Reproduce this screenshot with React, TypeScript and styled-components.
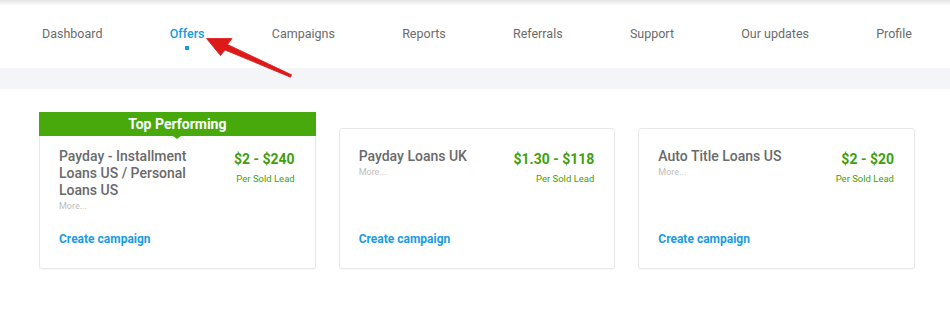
import React from "react";
import styled, { createGlobalStyle } from "styled-components";

const GlobalStyle = createGlobalStyle`
  html, body { margin: 0; padding: 0; background: #ffffff; }
  body { font-family: Roboto, "Liberation Sans", Arial, sans-serif; }
  * { box-sizing: border-box; }
`;

const Page = styled.div`
  position: relative;
  width: 950px;
  height: 329px;
  overflow: hidden;
  background: #fff;
`;

const TopShade = styled.div`
  height: 6px;
  background: linear-gradient(#e4e4e6, #ffffff);
`;

const Nav = styled.nav`
  height: 62px;
  display: flex;
  justify-content: space-between;
  align-items: flex-start;
  padding: 20px 38px 0 42px;
  background: #fff;
`;

const NavItem = styled.span<{ $active?: boolean }>`
  position: relative;
  font-size: 12.5px;
  line-height: 16px;
  color: ${(p) => (p.$active ? "#1b9be0" : "#6b6b6b")};
  font-weight: ${(p) => (p.$active ? 500 : 400)};
  &::after {
    content: "";
    display: ${(p) => (p.$active ? "block" : "none")};
    position: absolute;
    left: 50%;
    margin-left: -2px;
    top: 20px;
    width: 4px;
    height: 4px;
    background: #1b9be0;
  }
`;

const Band = styled.div`
  height: 21px;
  background: #f4f5f8;
`;

const Cards = styled.div`
  display: grid;
  grid-template-columns: repeat(3, 1fr);
  column-gap: 23px;
  padding: 39px 35px 0 39px;
  align-items: stretch;
`;

const Card = styled.div`
  position: relative;
  display: flex;
  flex-direction: column;
  border: 1px solid #e7e8ea;
  border-radius: 3px;
  background: #fff;
  padding: 19px 20px 22px 19px;
  box-shadow: 0 1px 1px rgba(0, 0, 0, 0.03);
`;

const Banner = styled.div`
  position: absolute;
  top: -17px;
  left: -1px;
  right: -1px;
  height: 24px;
  background: #47a90c;
  color: #fff;
  font-weight: 700;
  font-size: 14px;
  line-height: 24px;
  text-align: center;
  &::after {
    content: "";
    position: absolute;
    left: 50%;
    bottom: -3px;
    margin-left: -4px;
    border-left: 4px solid transparent;
    border-right: 4px solid transparent;
    border-top: 3px solid #47a90c;
  }
`;

const TopRow = styled.div`
  display: flex;
  justify-content: space-between;
  align-items: flex-start;
  gap: 12px;
`;

const Info = styled.div`
  flex: 1;
  min-width: 0;
`;

const Title = styled.div`
  font-size: 14px;
  line-height: 17px;
  font-weight: 500;
  color: #6a6a6a;
  max-width: 140px;
`;

const More = styled.div`
  font-size: 9px;
  line-height: 12px;
  color: #bdbdbd;
  margin-top: 1px;
`;

const PriceBox = styled.div`
  text-align: right;
  white-space: nowrap;
  padding-top: 2px;
`;

const Price = styled.div`
  font-size: 14px;
  line-height: 18px;
  font-weight: 700;
  color: #3f9f0c;
`;

const PerLead = styled.div`
  font-size: 9.5px;
  line-height: 12px;
  color: #3f9f0c;
  margin-top: 5px;
`;

const CreateLink = styled.a`
  display: block;
  margin-top: auto;
  padding-top: 20px;
  font-size: 12px;
  line-height: 14px;
  font-weight: 700;
  color: #1a9be2;
  text-decoration: none;
`;

const ArrowLayer = styled.svg`
  position: absolute;
  left: 0;
  top: 0;
  pointer-events: none;
`;

const navItems = [
  "Dashboard",
  "Offers",
  "Campaigns",
  "Reports",
  "Referrals",
  "Support",
  "Our updates",
  "Profile",
];

const offers = [
  {
    title: "Payday - Installment Loans US / Personal Loans US",
    price: "$2 - $240",
    top: true,
  },
  { title: "Payday Loans UK", price: "$1.30 - $118", top: false },
  { title: "Auto Title Loans US", price: "$2 - $20", top: false },
];

export default function App() {
  return (
    <Page>
      <GlobalStyle />
      <TopShade />
      <Nav>
        {navItems.map((n) => (
          <NavItem key={n} $active={n === "Offers"}>
            {n}
          </NavItem>
        ))}
      </Nav>
      <Band />
      <Cards>
        {offers.map((o) => (
          <Card key={o.title}>
            {o.top && <Banner>Top Performing</Banner>}
            <TopRow>
              <Info>
                <Title>{o.title}</Title>
                <More>More...</More>
              </Info>
              <PriceBox>
                <Price>{o.price}</Price>
                <PerLead>Per Sold Lead</PerLead>
              </PriceBox>
            </TopRow>
            <CreateLink href="#">Create campaign</CreateLink>
          </Card>
        ))}
      </Cards>
      <ArrowLayer width="950" height="329" viewBox="0 0 950 329">
        <polygon
          points="206.5,38.5 232,38.5 227.5,44.5 291.5,74.8 290.5,77.2 225,50 220.5,55.5"
          fill="#dc1a1a"
          stroke="#dc1a1a"
          strokeWidth="0.8"
          strokeLinejoin="round"
        />
      </ArrowLayer>
    </Page>
  );
}
